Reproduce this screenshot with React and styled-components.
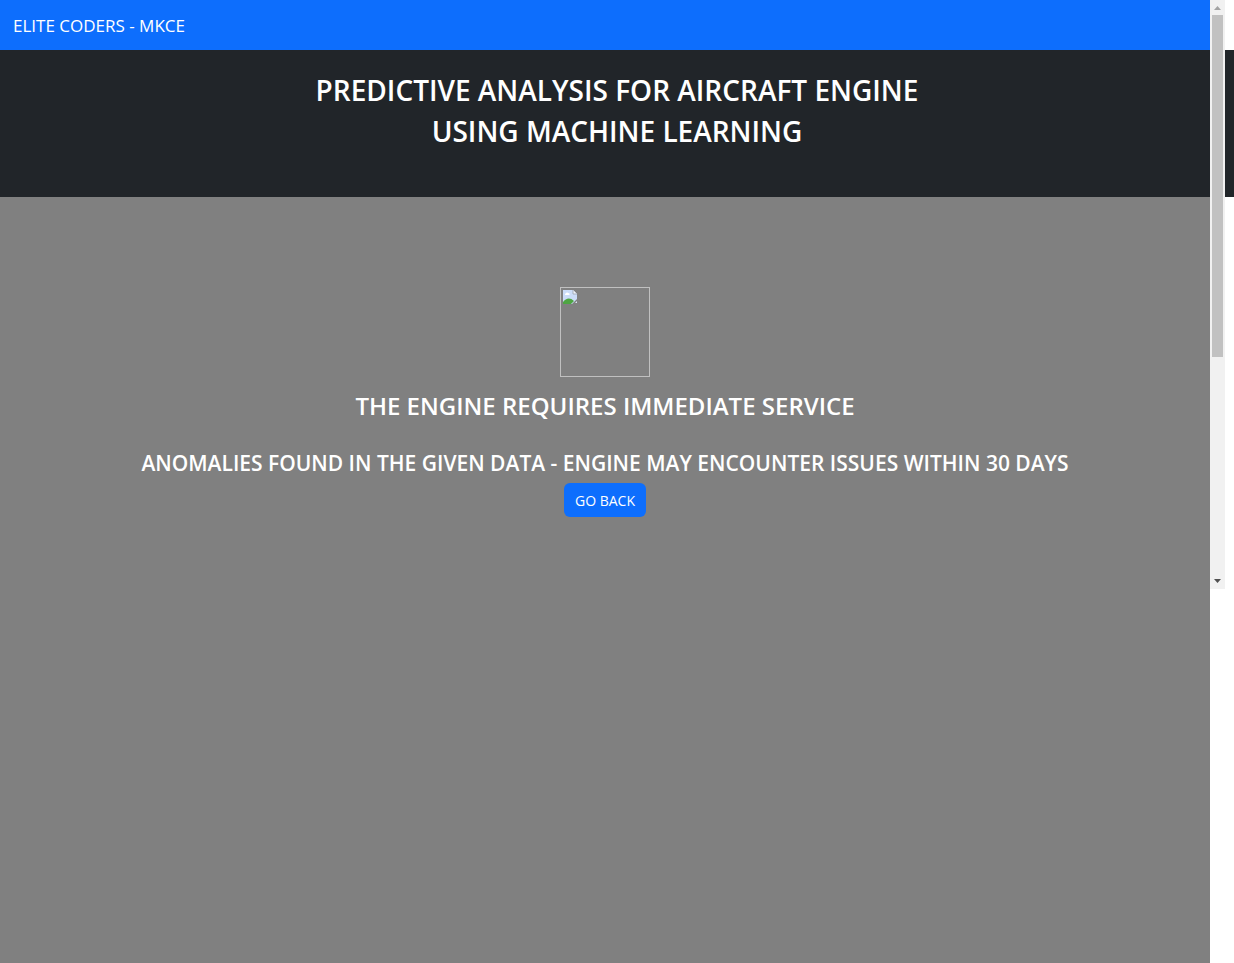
import React from "react";
import styled, { createGlobalStyle } from "styled-components";

const GlobalStyle = createGlobalStyle`
  *, *::before, *::after { box-sizing: border-box; }
  body {
    margin: 0;
    background: #fff;
    color: #fff;
    font-family: "Segoe UI", "Open Sans", "Noto Sans", sans-serif;
    font-size: 14px;
  }
`;

const Page = styled.div`
  position: relative;
  display: flex;
  flex-direction: column;
  min-height: 100vh;
`;

const Navbar = styled.nav`
  display: flex;
  align-items: center;
  height: 50px;
  margin-right: 24px;
  padding: 2px 13px 0;
  background: #0d6efd;
`;

const Brand = styled.a`
  color: #fff;
  font-size: 17px;
  line-height: 26px;
  text-decoration: none;
`;

const Header = styled.header`
  height: 147px;
  padding-top: 20px;
  background: #212529;
  text-align: center;
`;

const Title = styled.h1`
  margin: 0;
  font-size: 28px;
  font-weight: 600;
  line-height: 41px;
`;

const Result = styled.main`
  flex: 1;
  display: flex;
  flex-direction: column;
  align-items: center;
  margin-right: 24px;
  padding-top: 90px;
  background: #808080;
  text-align: center;
`;

const Picture = styled.div`
  width: 90px;
  height: 90px;
  padding: 2px;
  border: 1px solid #c0c0c0;
`;

const PictureIcon = styled.svg`
  display: block;
`;

const Status = styled.h2`
  margin: 11px 0 0;
  font-size: 24px;
  font-weight: 600;
  line-height: 36px;
`;

const Detail = styled.h3`
  margin: 24px 0 0;
  font-size: 21px;
  font-weight: 600;
  line-height: 30px;
`;

const BackButton = styled.button`
  height: 34px;
  margin-top: 5px;
  padding: 0 11px;
  border: 0;
  border-radius: 6px;
  background: #0d6efd;
  color: #fff;
  font: inherit;
  cursor: pointer;
`;

const Scrollbar = styled.div`
  position: absolute;
  top: 0;
  right: 9px;
  display: flex;
  flex-direction: column;
  width: 15px;
  height: 589px;
  background: #f1f1f1;
`;

const ScrollArrow = styled.svg`
  display: block;
  flex: none;
`;

const ScrollTrack = styled.div`
  flex: 1;
  padding: 0 2px;
`;

const ScrollThumb = styled.div`
  height: 342px;
  background: #c1c1c1;
`;

export default function App() {
  return (
    <>
      <GlobalStyle />
      <Page>
        <Navbar>
          <Brand href="#">ELITE CODERS - MKCE</Brand>
        </Navbar>
        <Header>
          <Title>
            PREDICTIVE ANALYSIS FOR AIRCRAFT ENGINE
            <br />
            USING MACHINE LEARNING
          </Title>
        </Header>
        <Result>
          <Picture>
            <PictureIcon width="14" height="14" viewBox="0 0 14 14" aria-hidden="true">
              <path d="M0 0H10L14 4V9L9 14H0Z" fill="#cbdcf8" />
              <path d="M10 0L14 4H10Z" fill="#f3f6fb" />
              <path d="M10 0V4H14" fill="none" stroke="#a5aebc" />
              <path d="M2 5C2 3 4 2 5 3C7 3 7 5 6 5Z" fill="#fff" />
              <path d="M0 14V12C3 8 7 7 11 11L8 14Z" fill="#4fa543" />
              <path d="M12 13L14 11V13Z" fill="#dce5f4" />
            </PictureIcon>
          </Picture>
          <Status>THE ENGINE REQUIRES IMMEDIATE SERVICE</Status>
          <Detail>
            ANOMALIES FOUND IN THE GIVEN DATA - ENGINE MAY ENCOUNTER ISSUES WITHIN 30 DAYS
          </Detail>
          <BackButton type="button">GO BACK</BackButton>
        </Result>
        <Scrollbar aria-hidden="true">
          <ScrollArrow width="15" height="15" viewBox="0 0 15 15">
            <path d="M4 10L7.5 6L11 10Z" fill="#a3a3a3" />
          </ScrollArrow>
          <ScrollTrack>
            <ScrollThumb />
          </ScrollTrack>
          <ScrollArrow width="15" height="15" viewBox="0 0 15 15">
            <path d="M4 5L7.5 9L11 5Z" fill="#505050" />
          </ScrollArrow>
        </Scrollbar>
      </Page>
    </>
  );
}
